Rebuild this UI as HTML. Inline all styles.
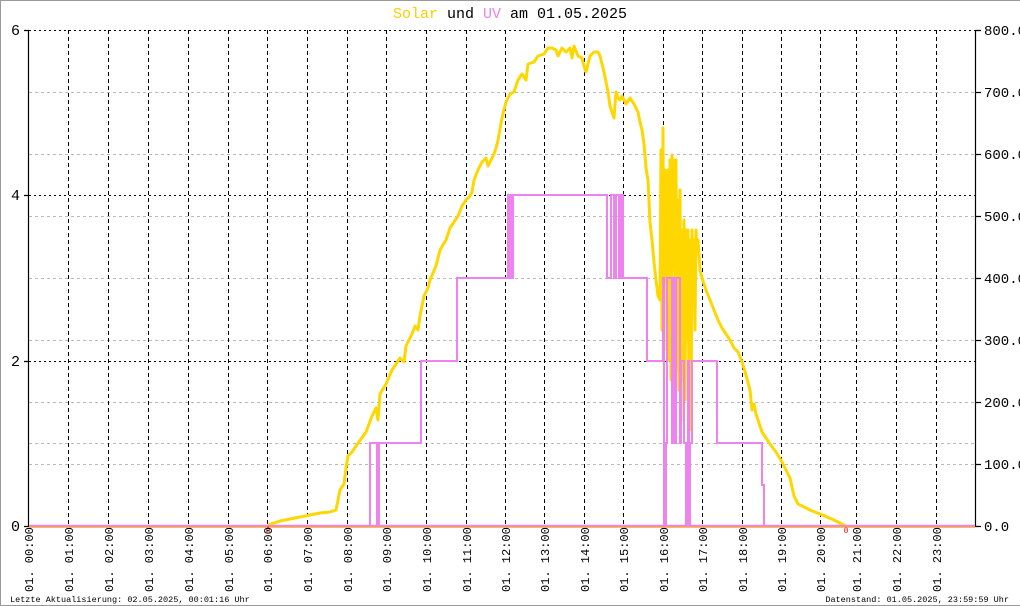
<!DOCTYPE html>
<html><head><meta charset="utf-8"><style>
html,body{margin:0;padding:0;background:#fff;}
svg{display:block;}
text{font-family:"Liberation Mono","DejaVu Sans Mono",monospace;}
</style></head><body>
<svg width="1020" height="606" viewBox="0 0 1020 606" xmlns="http://www.w3.org/2000/svg">
<rect x="0.5" y="0.5" width="1030" height="605" fill="#fff" stroke="#999"/>
<text x="510" y="18" font-size="15" text-anchor="middle" fill="#000"><tspan fill="#ffcc00">Solar</tspan> und <tspan fill="#ee82ee">UV</tspan> am 01.05.2025</text>
<g stroke="#bbb" stroke-width="1" stroke-dasharray="3,3">
<path d="M29 92.5H975M29 154.5H975M29 216.5H975M29 278.5H975M29 340.5H975M29 402.5H975M29 464.5H975M29 443.5H975"/>
</g>
<g stroke="#000" stroke-width="1" stroke-dasharray="4,3">
<path d="M68.5 30V526M108.5 30V526M148.5 30V526M188.5 30V526M228.5 30V526M267.5 30V526M307.5 30V526M347.5 30V526M386.5 30V526M426.5 30V526M466.5 30V526M505.5 30V526M544.5 30V526M584.5 30V526M623.5 30V526M663.5 30V526M702.5 30V526M742.5 30V526M781.5 30V526M820.5 30V526M856.5 30V526M896.5 30V526M936.5 30V526"/>
</g>
<g stroke="#000" stroke-width="1" stroke-dasharray="2,3">
<path d="M29 30.5H975M29 195.5H975M29 361.5H975"/>
</g>
<path d="M28.5 30V526.5M975.5 30V526.5M24 30.5H29M24 195.5H29M24 361.5H29M24 526.5H29M975 30.5H981M975 92.5H981M975 154.5H981M975 216.5H981M975 278.5H981M975 340.5H981M975 402.5H981M975 464.5H981M975 526.5H981" stroke="#000" stroke-width="1.2" fill="none"/>
<g font-size="15" fill="#000" text-anchor="end">
<text x="20" y="35">6</text><text x="20" y="200">4</text><text x="20" y="366">2</text><text x="20" y="531">0</text>
</g>
<g font-size="14" fill="#000">
<text x="984" y="35">800.0</text><text x="984" y="97">700.0</text><text x="984" y="159">600.0</text><text x="984" y="221">500.0</text><text x="984" y="283">400.0</text><text x="984" y="345">300.0</text><text x="984" y="407">200.0</text><text x="984" y="469">100.0</text><text x="984" y="531">0.0</text>
</g>
<path d="M29 526H975" stroke="#ee82ee" stroke-width="2.5"/>
<path d="M29 527.5H975" stroke="#ffcc00" stroke-width="1"/>
<polyline fill="none" stroke="#ffd700" stroke-width="3" stroke-linejoin="round" points="268,525 280,521 300,517 320,513 330,512 336,510 338,500 340,490 344,484 346,468 348,456 352,452 356,446 366,432 372,416 376,408 378,420 380,394 386,384 392,370 400,358 404,362 406,346 412,334 415,326 418,330 420,316 422,306 424,296 428,288 430,280 436,266 440,250 446,240 450,228 454,222 458,216 462,206 466,200 470,196 472,192 474,180 478,170 482,162 486,158 488,166 494,154 496,148 498,140 502,118 506,102 510,94 514,92 518,80 522,74 526,80 528,64 534,62 538,56 544,54 548,48 552,48 556,50 558,56 562,48 566,52 570,48 572,58 574,46 578,56 582,58 584,66 586,72 590,56 594,52 598,52 600,56 604,72 606,82 608,92 610,106 612,112 614,118 616,92 618,98 620,100 622,96 626,104 630,98 634,104 638,112 640,122 642,130 644,144 646,168 648,180 650,222 652,240 654,262 656,280 658,296 660,300 661,150 662,330 663,128 664,350 665,170 666,210 667,280 668,170 669,360 670,160 671,380 672,155 673,270 674,160 675,300 676,160 677,370 678,200 679,390 680,190 681,420 682,230 683,380 684,220 685,400 686,230 687,340 688,230 689,400 690,240 691,430 692,230 693,300 694,240 695,330 696,230 697,250 698,240 700,270 702,278 706,290 710,300 714,310 718,320 722,328 726,334 730,340 734,348 738,352 742,362 746,375 750,390 752,410 754,404 756,414 758,420 762,432 766,438 770,444 776,452 782,462 786,470 790,478 794,496 798,504 810,510 820,514 834,520 846,526"/>
<polyline fill="none" stroke="#ee82ee" stroke-width="2" points="29,526 370,526 370,443 377,443 377,526 379,526 379,443 421,443 421,361 457,361 457,278 508,278 508,195 510,195 510,278 511,278 511,195 513,195 513,278 512,278 512,195 607,195 607,278 611,278 611,195 614,195 614,278 616,278 616,195 619,195 619,278 621,278 621,195 623,195 623,278 647,278 647,361 663,361 663,278 664,278 664,526 666,526 666,443 667,443 667,278 672,278 672,443 673,443 673,278 675,278 675,443 676,443 676,278 680,278 680,443 681,443 681,361 684,361 684,443 686,443 686,526 688,526 688,361 689,361 689,526 690,526 690,443 692,443 692,361 717,361 717,443 762,443 762,485 764,485 764,526 975,526"/>
<text x="268" y="532" font-size="8" fill="#e00" text-anchor="middle">A</text>
<text x="846" y="533" font-size="8" fill="#e00" text-anchor="middle">0</text>
<g font-size="12" fill="#000">
<text transform="translate(33,592) rotate(-90)">01. 00:00</text>
<text transform="translate(73,592) rotate(-90)">01. 01:00</text>
<text transform="translate(113,592) rotate(-90)">01. 02:00</text>
<text transform="translate(153,592) rotate(-90)">01. 03:00</text>
<text transform="translate(193,592) rotate(-90)">01. 04:00</text>
<text transform="translate(233,592) rotate(-90)">01. 05:00</text>
<text transform="translate(272,592) rotate(-90)">01. 06:00</text>
<text transform="translate(312,592) rotate(-90)">01. 07:00</text>
<text transform="translate(352,592) rotate(-90)">01. 08:00</text>
<text transform="translate(391,592) rotate(-90)">01. 09:00</text>
<text transform="translate(431,592) rotate(-90)">01. 10:00</text>
<text transform="translate(471,592) rotate(-90)">01. 11:00</text>
<text transform="translate(510,592) rotate(-90)">01. 12:00</text>
<text transform="translate(549,592) rotate(-90)">01. 13:00</text>
<text transform="translate(589,592) rotate(-90)">01. 14:00</text>
<text transform="translate(628,592) rotate(-90)">01. 15:00</text>
<text transform="translate(668,592) rotate(-90)">01. 16:00</text>
<text transform="translate(707,592) rotate(-90)">01. 17:00</text>
<text transform="translate(747,592) rotate(-90)">01. 18:00</text>
<text transform="translate(786,592) rotate(-90)">01. 19:00</text>
<text transform="translate(825,592) rotate(-90)">01. 20:00</text>
<text transform="translate(861,592) rotate(-90)">01. 21:00</text>
<text transform="translate(901,592) rotate(-90)">01. 22:00</text>
<text transform="translate(941,592) rotate(-90)">01. 23:00</text>
</g>
<text x="10" y="602" font-size="8.5" fill="#000">Letzte Aktualisierung: 02.05.2025, 00:01:16 Uhr</text>
<text x="1009" y="602" font-size="8.5" fill="#000" text-anchor="end">Datenstand: 01.05.2025, 23:59:59 Uhr</text>
</svg>
</body></html>
